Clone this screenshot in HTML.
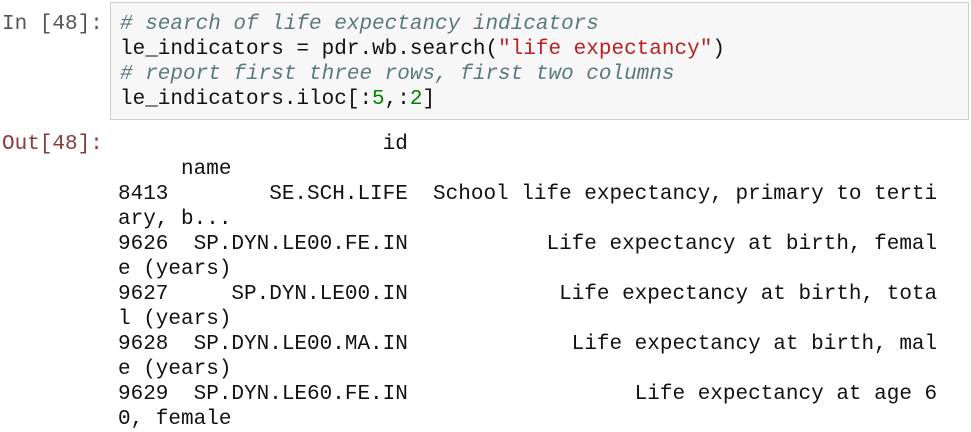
<!DOCTYPE html>
<html><head><meta charset="utf-8"><style>
body{margin:0;width:971px;height:430px;background:#fff;overflow:hidden;position:relative;font-family:"Liberation Mono",monospace;font-size:21px;}
pre{margin:0;font-family:inherit;font-size:21px;line-height:25px;position:absolute;}
.box{position:absolute;left:110px;top:2px;width:857px;height:116px;background:#f7f7f7;border:1px solid #cfcfcf;}
.c{color:#5a7a7a;font-style:italic}
.s{color:#ba2121}
.n{color:#008000}
.p{color:#555}
.o{color:#8b3a3a}
</style></head><body>
<pre class="p" style="left:2px;top:12px">In [48]:</pre>
<div class="box"></div>
<pre style="left:120px;top:12px;color:#111"><span class="c"># search of life expectancy indicators</span>
le_indicators = pdr.wb.search(<span class="s">"life expectancy"</span>)
<span class="c"># report first three rows, first two columns</span>
le_indicators.iloc[:<span class="n">5</span>,:<span class="n">2</span>]</pre>
<pre class="o" style="left:2px;top:132px">Out[48]:</pre>
<pre style="left:118px;top:132px;color:#111">                     id
     name
8413        SE.SCH.LIFE  School life expectancy, primary to terti
ary, b...
9626  SP.DYN.LE00.FE.IN           Life expectancy at birth, femal
e (years)
9627     SP.DYN.LE00.IN            Life expectancy at birth, tota
l (years)
9628  SP.DYN.LE00.MA.IN             Life expectancy at birth, mal
e (years)
9629  SP.DYN.LE60.FE.IN                  Life expectancy at age 6
0, female</pre>
</body></html>
